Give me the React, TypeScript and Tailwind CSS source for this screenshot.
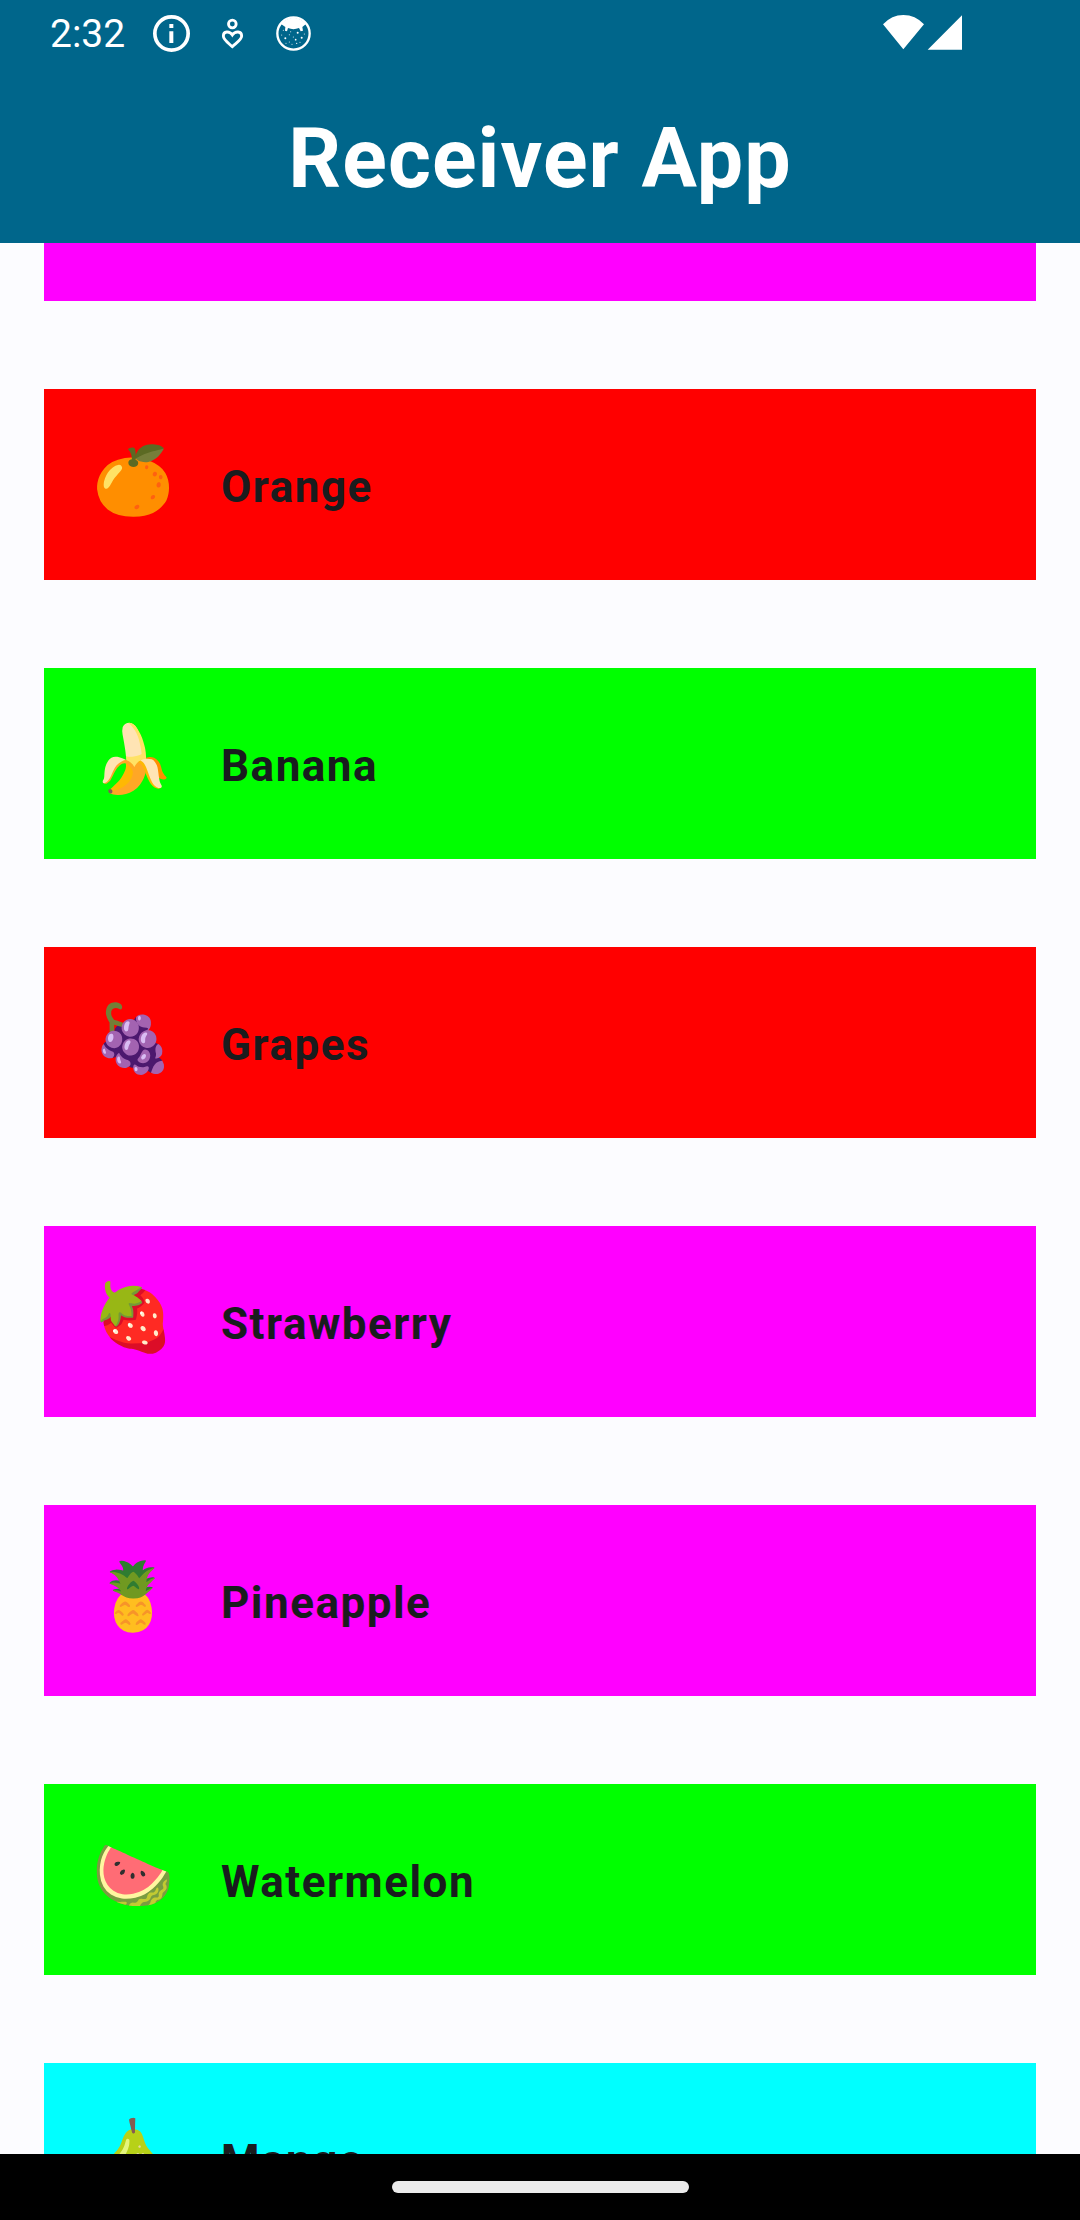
const fruits = [
  { name: "Orange", emoji: "🍊", color: "bg-[#ff0000]" },
  { name: "Banana", emoji: "🍌", color: "bg-[#00ff00]" },
  { name: "Grapes", emoji: "🍇", color: "bg-[#ff0000]" },
  { name: "Strawberry", emoji: "🍓", color: "bg-[#ff00ff]" },
  { name: "Pineapple", emoji: "🍍", color: "bg-[#ff00ff]" },
  { name: "Watermelon", emoji: "🍉", color: "bg-[#00ff00]" },
  { name: "Mango", emoji: "🍐", color: "bg-[#00ffff]" },
];

function StatusBar() {
  return (
    <div className="flex h-[66px] items-start pl-[50px] pr-[118px] text-white">
      <span className="mt-[11px] w-[103px] text-[39px] leading-[46px]">2:32</span>
      <svg viewBox="459 45 111 111" className="mt-[15px] h-[37px] w-[37px]">
        <circle cx="514.500" cy="100.500" r="50" fill="none" stroke="white" strokeWidth="11" />
        <path d="M508 72h12v12h-12zM508 94h12v35h-12z" fill="white" />
      </svg>
      <svg viewBox="660 50 75 99" className="ml-[30px] mt-[17px] h-[33px] w-[25px]" fill="none" stroke="white">
        <circle cx="697" cy="71" r="11.500" strokeWidth="8.5" />
        <path d="M697 139C684 127 670 118 670 107C670 92 688 91 697 104C706 91 725 92 725 107C725 118 710 127 697 139Z" strokeWidth="8.5" />
      </svg>
      <svg viewBox="828 48 105 105" className="ml-[31px] mt-[16px] h-[35px] w-[35px]">
        <circle cx="880.500" cy="100.500" r="48.500" fill="none" stroke="white" strokeWidth="7" />
        <path d="M843 72Q880 34 918 72L907 81L909 92L902 94L897 84Q880 91 864 84L861 94L855 92L856 81Z" fill="white" />
        <g fill="white">
          <circle cx="850" cy="91" r="1.500" /><circle cx="872" cy="95" r="1.500" /><circle cx="893" cy="98" r="3" />
          <circle cx="845" cy="105" r="1.500" /><circle cx="856" cy="115" r="3" /><circle cx="868" cy="104" r="1.500" />
          <circle cx="880" cy="111" r="1.500" /><circle cx="887" cy="119" r="2.500" /><circle cx="905" cy="113" r="3" />
          <circle cx="868" cy="126" r="1.500" /><circle cx="876" cy="133" r="1.500" /><circle cx="890" cy="130" r="2" />
          <circle cx="913" cy="102" r="1.500" /><circle cx="900" cy="127" r="1.500" /><circle cx="858" cy="130" r="1.500" />
        </g>
      </svg>
      <svg viewBox="129 45 237 105" className="ml-auto mt-[15px] h-[35px] w-[79px]" fill="white">
        <path d="M129 73Q155 45 190 45Q226 45 252 73L190 148ZM366 46V149H263Z" />
      </svg>
    </div>
  );
}

export default function App() {
  return (
    <div className="flex h-[2220px] w-[1080px] flex-col overflow-hidden bg-[#fcfcff] font-['Roboto',sans-serif]">
      <header className="h-[243px] shrink-0 bg-[#00668b]">
        <StatusBar />
        <h1 className="mt-[44px] text-center text-[82.5px] font-bold leading-[97px] tracking-[1.1px] text-white">Receiver App</h1>
      </header>
      <main className="flex min-h-0 flex-1 flex-col gap-[88px] overflow-hidden px-[44px]">
        <div className="h-[58px] shrink-0 bg-[#ff00ff]" />
        {fruits.map((fruit) => (
          <section key={fruit.name} className={`flex h-[191px] shrink-0 items-start pl-[44px] ${fruit.color}`}>
            <span className="mt-[53px] w-[90px] text-center text-[66px] leading-[78px] text-[#191c1e]">{fruit.emoji}</span>
            <span className="ml-[43px] mt-[72px] text-[44px] font-bold leading-[52px] tracking-[1.5px] text-[#191c1e]">{fruit.name}</span>
          </section>
        ))}
      </main>
      <footer className="flex h-[66px] shrink-0 justify-center bg-black pt-[27px]">
        <div className="h-[12px] w-[297px] rounded-full bg-[#ebebeb]" />
      </footer>
    </div>
  );
}
